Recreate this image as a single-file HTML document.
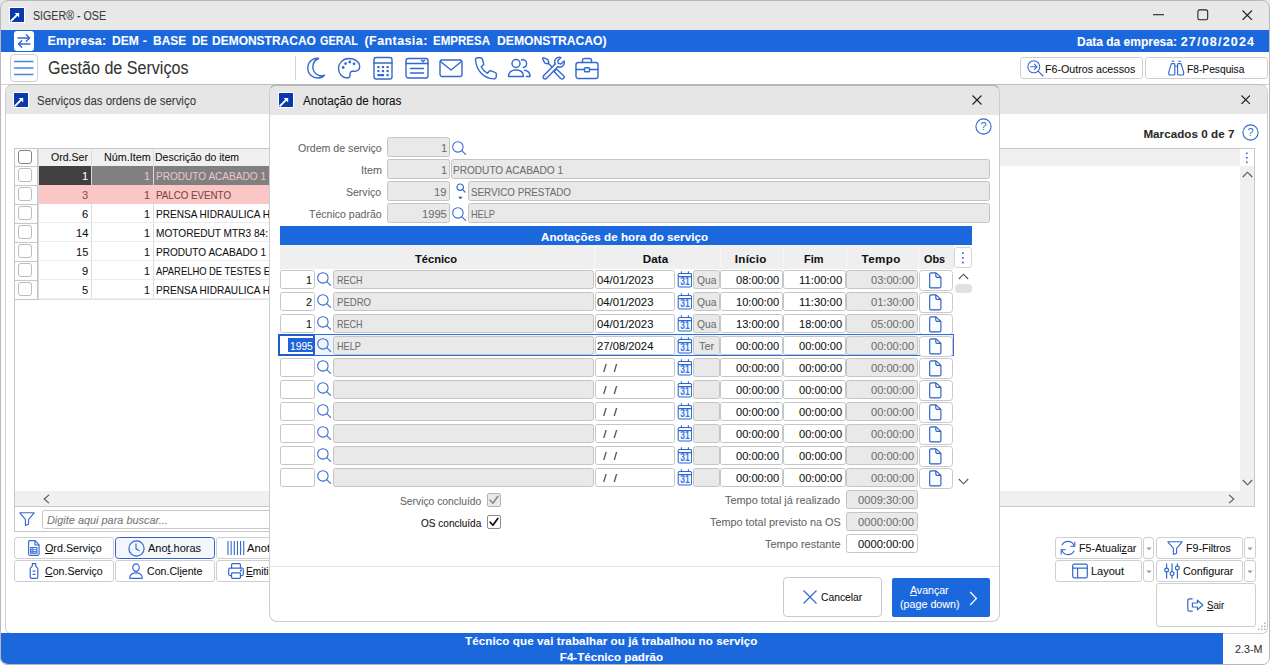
<!DOCTYPE html>
<html><head><meta charset="utf-8"><title>SIGER - OSE</title>
<style>
html,body{margin:0;padding:0;}
body{width:1270px;height:665px;overflow:hidden;background:#fff;font-family:"Liberation Sans",sans-serif;position:relative;}
#root{position:absolute;left:0;top:0;width:1270px;height:665px;overflow:hidden;}
#root div, #root svg, #root span.t{position:absolute;box-sizing:border-box;}
span.t{white-space:pre;line-height:16px;height:16px;-webkit-text-stroke:0.08px currentColor;}
.f{border:1px solid #c6c6c6;border-radius:2.5px;background:#fff;}
.g{border:1px solid #c4c4c4;border-radius:2.5px;background:#e9e9e9;}
.btn{border:1px solid #cfcfcf;border-radius:3px;background:#fff;}
</style></head><body><div id="root">
<div class="" style="left:0px;top:0px;width:1270px;height:665px;background:#fff;"></div>
<div class="" style="left:0px;top:0px;width:1270px;height:30px;background:#e8e8e8;"></div>
<svg style="left:9px;top:7px;" width="16" height="16" viewBox="0 0 16 16" preserveAspectRatio="none" fill="none"><rect x="0" y="0" width="16" height="16" fill="#fff"/><rect x="1" y="1" width="14" height="14" fill="#0b38ac"/><path d="M1.6 14.4 L8.6 7.4" stroke="#fff" stroke-width="2"/><path d="M5.6 6 H10.2 V10.6 Z" fill="#fff"/></svg>
<span class="t" style="left:33px;top:7.97px;font-size:12.5px;font-weight:400;color:#3a3a3a;letter-spacing:0.000px;transform:scaleX(0.8526);transform-origin:0 0;">SIGER® - OSE</span>
<svg style="left:1153px;top:14px;" width="12" height="2" viewBox="0 0 12 2" preserveAspectRatio="none" fill="none"><path d="M0 0.7 H11" stroke="#222" stroke-width="1.1"/></svg>
<svg style="left:1197px;top:9px;" width="12" height="12" viewBox="0 0 12 12" preserveAspectRatio="none" fill="none"><rect x="0.9" y="0.9" width="9.8" height="9.8" rx="1.8" stroke="#222" stroke-width="1.1"/></svg>
<svg style="left:1242px;top:9.5px;" width="10.5" height="10.5" viewBox="0 0 10.5 10.5" preserveAspectRatio="none" fill="none"><path d="M0.5 0.5 L10.0 10.0 M10.0 0.5 L0.5 10.0" stroke="#222" stroke-width="1.1"/></svg>
<div class="" style="left:0px;top:30px;width:1270px;height:22px;background:#1b68dd;"></div>
<div class="" style="left:14px;top:31px;width:20px;height:20px;background:#fff;border-radius:3px;"></div>
<svg style="left:14px;top:31px;" width="20" height="20" viewBox="0 0 20 20" preserveAspectRatio="none" fill="none"><path d="M4 7 H15.5 M12.3 3.8 L15.6 7 L12.3 10.2 M16 13 H4.5 M7.7 9.8 L4.4 13 L7.7 16.2" stroke="#3368cc" stroke-width="1.4" stroke-linecap="round" stroke-linejoin="round"/></svg>
<span class="t" style="left:47.5px;top:32.97px;font-size:12.5px;font-weight:700;color:#fff;letter-spacing:0.245px;">Empresa:</span>
<span class="t" style="left:111.9px;top:32.97px;font-size:12.5px;font-weight:700;color:#fff;letter-spacing:0.000px;transform:scaleX(0.9647);transform-origin:0 0;">DEM</span>
<span class="t" style="left:142.8px;top:32.97px;font-size:12.5px;font-weight:700;color:#fff;letter-spacing:0.328px;">-</span>
<span class="t" style="left:153px;top:32.97px;font-size:12.5px;font-weight:700;color:#fff;letter-spacing:0.000px;transform:scaleX(0.9558);transform-origin:0 0;">BASE</span>
<span class="t" style="left:191.9px;top:32.97px;font-size:12.5px;font-weight:700;color:#fff;letter-spacing:0.000px;transform:scaleX(0.9151);transform-origin:0 0;">DE</span>
<span class="t" style="left:212.4px;top:32.97px;font-size:12.5px;font-weight:700;color:#fff;letter-spacing:0.000px;transform:scaleX(0.9590);transform-origin:0 0;">DEMONSTRACAO</span>
<span class="t" style="left:319.7px;top:32.97px;font-size:12.5px;font-weight:700;color:#fff;letter-spacing:0.000px;transform:scaleX(0.8686);transform-origin:0 0;">GERAL</span>
<span class="t" style="left:364.5px;top:32.97px;font-size:12.5px;font-weight:700;color:#fff;letter-spacing:0.417px;">(Fantasia:</span>
<span class="t" style="left:433px;top:32.97px;font-size:12.5px;font-weight:700;color:#fff;letter-spacing:0.000px;transform:scaleX(0.9235);transform-origin:0 0;">EMPRESA</span>
<span class="t" style="left:497px;top:32.97px;font-size:12.5px;font-weight:700;color:#fff;letter-spacing:0.000px;transform:scaleX(0.9742);transform-origin:0 0;">DEMONSTRACAO)</span>
<span class="t" style="left:1076.5px;top:33.77px;font-size:12.5px;font-weight:700;color:#fff;letter-spacing:0.000px;transform:scaleX(0.9586);transform-origin:0 0;">Data da empresa:</span>
<span class="t" style="left:1180.7px;top:33.77px;font-size:12.5px;font-weight:700;color:#fff;letter-spacing:1.200px;">27/08/2024</span>
<div class="" style="left:10px;top:54px;width:28px;height:28px;background:#fff;border:1px solid #cdcdcd;border-radius:4px;"></div>
<svg style="left:14px;top:60px;" width="20" height="16" viewBox="0 0 20 16" preserveAspectRatio="none" fill="none"><path d="M0 1.5 H19.5 M0 8 H19.5 M0 14.5 H19.5" stroke="#4a88dc" stroke-width="1.5"/></svg>
<span class="t" style="left:47.5px;top:60.20px;font-size:17.6px;font-weight:400;color:#333;letter-spacing:0.000px;transform:scaleX(0.9150);transform-origin:0 0;">Gestão de Serviços</span>
<div class="" style="left:295px;top:56px;width:1px;height:24px;background:#d4d4d4;"></div>
<svg style="left:303px;top:56px;" width="24" height="24" viewBox="0 0 24 24" preserveAspectRatio="none" fill="none"><g stroke="#3368cc" stroke-width="1.4" stroke-linecap="round" stroke-linejoin="round"><path d="M15.5 2.5 C10 4.5 8.5 11 11 15.5 C13 19.3 17.5 21 21.5 19.2 C18.5 22.8 12 23 8 19.5 C3.5 15.5 3.8 8 8.5 4.3 C10.6 2.7 13.2 2 15.5 2.5 Z"/></g></svg>
<svg style="left:337px;top:56px;" width="24" height="24" viewBox="0 0 24 24" preserveAspectRatio="none" fill="none"><g stroke="#3368cc" stroke-width="1.4" stroke-linecap="round" stroke-linejoin="round"><path d="M12 2.5 C5.5 2.5 1.5 7.5 1.5 12.5 C1.5 18 5.5 22 10 22 C12.5 22 13.3 20.4 13 18.6 C12.6 16.4 14 15 16.3 15.2 C20 15.6 23 13.8 22.7 10.3 C22.3 5.6 17.8 2.5 12 2.5 Z"/><circle cx="6.2" cy="11.5" r="0.7" fill="#3368cc"/><circle cx="8.6" cy="7.6" r="0.7" fill="#3368cc"/><circle cx="12.8" cy="6" r="0.7" fill="#3368cc"/><circle cx="17" cy="7.8" r="0.7" fill="#3368cc"/></g></svg>
<svg style="left:371px;top:56px;" width="24" height="24" viewBox="0 0 24 24" preserveAspectRatio="none" fill="none"><g stroke="#3368cc" stroke-width="1.4" stroke-linecap="round" stroke-linejoin="round"><rect x="3" y="1.5" width="18" height="21.5" rx="2.2"/><path d="M3 7 H21"/><g fill="#3368cc" stroke="none"><rect x="6.3" y="10" width="2.2" height="2.2"/><rect x="10.9" y="10" width="2.2" height="2.2"/><rect x="15.5" y="10" width="2.2" height="2.2"/><rect x="6.3" y="14" width="2.2" height="2.2"/><rect x="10.9" y="14" width="2.2" height="2.2"/><rect x="15.5" y="14" width="2.2" height="2.2"/><rect x="6.3" y="18" width="6.8" height="2.2"/><rect x="15.5" y="18" width="2.2" height="2.2"/></g></g></svg>
<svg style="left:405px;top:56px;" width="24" height="24" viewBox="0 0 24 24" preserveAspectRatio="none" fill="none"><g stroke="#3368cc" stroke-width="1.4" stroke-linecap="round" stroke-linejoin="round"><rect x="1" y="2.5" width="22" height="19.5" rx="2.2"/><path d="M1 7.5 H23 M5.5 12.5 H18.5 M5.5 17 H18.5 M16.5 4.3 L18 5.8 L19.5 4.3"/></g></svg>
<svg style="left:439px;top:56px;" width="24" height="24" viewBox="0 0 24 24" preserveAspectRatio="none" fill="none"><g stroke="#3368cc" stroke-width="1.4" stroke-linecap="round" stroke-linejoin="round"><rect x="1" y="4" width="22" height="16.5" rx="2.2"/><path d="M1.5 5.5 L12 14 L22.5 5.5"/></g></svg>
<svg style="left:473px;top:56px;" width="24" height="24" viewBox="0 0 24 24" preserveAspectRatio="none" fill="none"><g stroke="#3368cc" stroke-width="1.4" stroke-linecap="round" stroke-linejoin="round"><path d="M2.5 4.2 C2.2 2.8 3.3 1.8 4.8 1.8 H7.6 C8.5 1.8 9.1 2.3 9.4 3.2 L10.6 7.3 C10.8 8.1 10.6 8.8 9.9 9.4 L8.2 10.8 C9.6 13.8 11.6 15.8 14.6 17.3 L16 15.5 C16.5 14.8 17.3 14.6 18.1 14.9 L22 16.3 C22.9 16.6 23.3 17.3 23.3 18.1 V20.3 C23.3 21.9 22.2 23 20.6 22.9 C10.6 22.2 3.6 14.6 2.5 4.2 Z"/></g></svg>
<svg style="left:507px;top:56px;" width="24" height="24" viewBox="0 0 24 24" preserveAspectRatio="none" fill="none"><g stroke="#3368cc" stroke-width="1.4" stroke-linecap="round" stroke-linejoin="round"><circle cx="9" cy="7.5" r="4"/><path d="M1.5 20.5 C1.5 16.2 4.5 14 9 14 C13.5 14 16.5 16.2 16.5 20.5 Z"/><path d="M14.5 3.8 C17.3 3.2 19.6 5 19.6 7.6 C19.6 9.6 18.3 11.2 16.4 11.5 M17.5 14.2 C21 14.6 23 16.8 23 20.5 H19.3"/></g></svg>
<svg style="left:541px;top:56px;" width="24" height="24" viewBox="0 0 24 24" preserveAspectRatio="none" fill="none"><g stroke="#3368cc" stroke-width="1.4" stroke-linecap="round" stroke-linejoin="round"><path d="M14.2 8 L2.7 19.4 C1.8 20.3 1.8 21.6 2.6 22.4 C3.4 23.2 4.8 23.2 5.7 22.3 L16.8 10.7"/><path d="M14.2 8 C13 5.6 13.9 2.7 16.4 1.6 C17.6 1.1 18.9 1.1 20 1.6 L16.8 4.8 L17.4 7.4 L20 8 L23.1 4.9 C23.6 6.3 23.4 7.9 22.5 9.2 C21.2 11 18.8 11.6 16.8 10.7"/><circle cx="4.3" cy="20.7" r="0.55" fill="#3368cc" stroke="none"/><path d="M2.6 1.6 L6.8 3.6 L7.8 6.4 L6.4 7.8 L3.6 6.8 L1.6 2.6 Z M7 7 L10.6 10.6"/><path d="M13 15.4 L15.4 13 L22.4 19.6 C23.3 20.5 23.3 21.7 22.5 22.5 C21.7 23.3 20.4 23.3 19.6 22.4 Z"/></g></svg>
<svg style="left:575px;top:56px;" width="24" height="24" viewBox="0 0 24 24" preserveAspectRatio="none" fill="none"><g stroke="#3368cc" stroke-width="1.4" stroke-linecap="round" stroke-linejoin="round"><rect x="1" y="6.5" width="22" height="16" rx="2.2"/><path d="M7.5 6.5 V4.3 C7.5 3.2 8.3 2.5 9.4 2.5 H14.6 C15.7 2.5 16.5 3.2 16.5 4.3 V6.5 M1 13.5 H9.5 M14.5 13.5 H23"/><rect x="9.5" y="11.8" width="5" height="4" rx="0.8"/></g></svg>
<div class="btn" style="left:1020px;top:57px;width:123px;height:22px;"></div>
<svg style="left:1027px;top:60px;" width="17" height="17" viewBox="0 0 17 17" preserveAspectRatio="none" fill="none"><g stroke="#3368cc" stroke-width="1.1" stroke-linecap="round" stroke-linejoin="round"><circle cx="6.8" cy="6.8" r="6"/><path d="M11.2 11.2 L16 16 M3.6 6.8 H9.8 M7.4 4.2 L10 6.8 L7.4 9.4"/></g></svg>
<span class="t" style="left:1045.3px;top:61.08px;font-size:11.6px;font-weight:400;color:#111;letter-spacing:0.000px;transform:scaleX(0.9220);transform-origin:0 0;">F6-Outros acessos</span>
<div class="btn" style="left:1145px;top:57px;width:123px;height:22px;"></div>
<svg style="left:1168px;top:60px;" width="17" height="17" viewBox="0 0 17 17" preserveAspectRatio="none" fill="none"><g stroke="#3368cc" stroke-width="1.15" stroke-linejoin="round"><path d="M3.4 3.6 H6 Q6.8 3.6 6.8 4.4 V14 Q6.8 15 5.8 15 H1.8 Q0.8 15 0.8 14 V11.8 Z M13 3.6 H10.4 Q9.6 3.6 9.6 4.4 V14 Q9.6 15 10.6 15 H14.6 Q15.6 15 15.6 14 V11.8 Z M6.8 6.2 H9.6 M3.5 1.2 H6.2 M10.2 1.2 H12.9"/></g></svg>
<span class="t" style="left:1186.6px;top:61.08px;font-size:11.6px;font-weight:400;color:#111;letter-spacing:0.000px;transform:scaleX(0.8818);transform-origin:0 0;">F8-Pesquisa</span>
<div class="" style="left:0px;top:84px;width:1270px;height:1px;background:#d0d0d0;"></div>
<div class="" style="left:5px;top:84px;width:1263px;height:550px;background:#fff;border:1px solid #cfcfcf;border-top-color:#bdbdbd;border-radius:8px 8px 6px 6px;overflow:hidden;"><div style="left:0;top:0;width:1263px;height:29px;background:#e6e6e6;"></div></div>
<svg style="left:13px;top:91.5px;" width="16" height="16" viewBox="0 0 16 16" preserveAspectRatio="none" fill="none"><rect x="0" y="0" width="16" height="16" fill="#fff"/><rect x="1" y="1" width="14" height="14" fill="#0b38ac"/><path d="M1.6 14.4 L8.6 7.4" stroke="#fff" stroke-width="2"/><path d="M5.6 6 H10.2 V10.6 Z" fill="#fff"/></svg>
<span class="t" style="left:37px;top:92.57px;font-size:12.5px;font-weight:400;color:#3a3a3a;letter-spacing:0.000px;transform:scaleX(0.9154);transform-origin:0 0;">Serviços das ordens de serviço</span>
<svg style="left:1240.5px;top:94.5px;" width="9.5" height="9.5" viewBox="0 0 9.5 9.5" preserveAspectRatio="none" fill="none"><path d="M0.5 0.5 L9.0 9.0 M9.0 0.5 L0.5 9.0" stroke="#222" stroke-width="1.15"/></svg>
<span class="t" style="left:1143.4px;top:125.98px;font-size:11.6px;font-weight:700;color:#2a2a2a;letter-spacing:0.056px;">Marcados 0 de 7</span>
<svg style="left:1241.5px;top:123.5px;" width="17" height="17" viewBox="0 0 17 17" preserveAspectRatio="none" fill="none"><circle cx="8.5" cy="8.5" r="7.6" stroke="#3368cc" stroke-width="1.1"/><text x="8.5" y="12.4" font-family="Liberation Sans, sans-serif" font-size="11" font-weight="400" text-anchor="middle" fill="#3368cc">?</text></svg>
<div class="" style="left:14px;top:148px;width:1241px;height:359px;border:1px solid #c8c8c8;background:#fff;"></div>
<div class="" style="left:15px;top:149px;width:1239px;height:17px;background:#f0f0f0;"></div>
<div class="" style="left:1240px;top:149px;width:14px;height:17px;background:#fff;"></div>
<div class="" style="left:1240px;top:166px;width:14px;height:340px;background:#f0f0f0;"></div>
<div class="" style="left:15px;top:491px;width:1239px;height:15px;background:#f0f0f0;"></div>
<div class="" style="left:15px;top:149px;width:24px;height:151px;border-right:2px solid #c4c4c4;border-bottom:1px solid #c4c4c4;background:#fdfdfd;"></div>
<div class="" style="left:38px;top:149px;width:1px;height:150px;background:#d8d8d8;"></div>
<div class="" style="left:91px;top:149px;width:1px;height:150px;background:#dcdcdc;"></div>
<div class="" style="left:153px;top:149px;width:1px;height:150px;background:#dcdcdc;"></div>
<div class="" style="left:39px;top:166px;width:955px;height:1px;background:#e0e0e0;"></div>
<span class="t" style="left:51px;top:149.28px;font-size:11.6px;font-weight:400;color:#111;letter-spacing:0.000px;transform:scaleX(0.9115);transform-origin:0 0;">Ord.Ser</span>
<span class="t" style="left:103.5px;top:149.28px;font-size:11.6px;font-weight:400;color:#111;letter-spacing:0.000px;transform:scaleX(0.9294);transform-origin:0 0;">Núm.Item</span>
<span class="t" style="left:155.4px;top:149.28px;font-size:11.6px;font-weight:400;color:#111;letter-spacing:0.000px;transform:scaleX(0.9063);transform-origin:0 0;">Descrição do item</span>
<div class="" style="left:18px;top:150px;width:14px;height:14px;background:#fff;border:1px solid #858585;border-radius:3px;"></div>
<div class="" style="left:39px;top:166px;width:52px;height:19px;background:#404040;"></div>
<div class="" style="left:92px;top:166px;width:61px;height:19px;background:#808080;"></div>
<div class="" style="left:154px;top:166px;width:840px;height:19px;background:#808080;"></div>
<div class="" style="left:18px;top:168px;width:14px;height:14px;background:#fff;border:1px solid #bcbcbc;border-radius:3px;"></div>
<div class="" style="left:15px;top:166px;width:22px;height:1px;background:#c8c8c8;"></div>
<span class="t" style="left:82.1px;top:168.08px;font-size:11.6px;font-weight:400;color:#fff;letter-spacing:0.000px;transform:scaleX(0.9608);transform-origin:0 0;">1</span>
<span class="t" style="left:144.2px;top:168.08px;font-size:11.6px;font-weight:400;color:#e8c4c4;letter-spacing:0.000px;transform:scaleX(0.9298);transform-origin:0 0;">1</span>
<span class="t" style="left:156.2px;top:168.08px;font-size:11.6px;font-weight:400;color:#e8c4c4;letter-spacing:0.000px;transform:scaleX(0.8681);transform-origin:0 0;">PRODUTO ACABADO 1</span>
<div class="" style="left:39px;top:185px;width:955px;height:19px;background:#fbc6c6;"></div>
<div class="" style="left:18px;top:187px;width:14px;height:14px;background:#fff;border:1px solid #bcbcbc;border-radius:3px;"></div>
<div class="" style="left:15px;top:185px;width:22px;height:1px;background:#c8c8c8;"></div>
<span class="t" style="left:82.1px;top:187.08px;font-size:11.6px;font-weight:400;color:#8a5050;letter-spacing:0.000px;transform:scaleX(0.9608);transform-origin:0 0;">3</span>
<span class="t" style="left:144.2px;top:187.08px;font-size:11.6px;font-weight:400;color:#7a4444;letter-spacing:0.000px;transform:scaleX(0.9298);transform-origin:0 0;">1</span>
<span class="t" style="left:156.2px;top:187.08px;font-size:11.6px;font-weight:400;color:#7a4444;letter-spacing:0.000px;transform:scaleX(0.8414);transform-origin:0 0;">PALCO EVENTO</span>
<div class="" style="left:39px;top:222px;width:955px;height:1px;background:#ececec;"></div>
<div class="" style="left:18px;top:206px;width:14px;height:14px;background:#fff;border:1px solid #bcbcbc;border-radius:3px;"></div>
<div class="" style="left:15px;top:204px;width:22px;height:1px;background:#c8c8c8;"></div>
<span class="t" style="left:82.1px;top:206.08px;font-size:11.6px;font-weight:400;color:#111;letter-spacing:0.000px;transform:scaleX(0.9608);transform-origin:0 0;">6</span>
<span class="t" style="left:144.2px;top:206.08px;font-size:11.6px;font-weight:400;color:#111;letter-spacing:0.000px;transform:scaleX(0.9298);transform-origin:0 0;">1</span>
<span class="t" style="left:156.2px;top:206.08px;font-size:11.6px;font-weight:400;color:#111;letter-spacing:0.000px;transform:scaleX(0.8673);transform-origin:0 0;">PRENSA HIDRAULICA H</span>
<div class="" style="left:39px;top:241px;width:955px;height:1px;background:#ececec;"></div>
<div class="" style="left:18px;top:225px;width:14px;height:14px;background:#fff;border:1px solid #bcbcbc;border-radius:3px;"></div>
<div class="" style="left:15px;top:223px;width:22px;height:1px;background:#c8c8c8;"></div>
<span class="t" style="left:75.89999999999999px;top:225.08px;font-size:11.6px;font-weight:400;color:#111;letter-spacing:0.000px;transform:scaleX(0.9608);transform-origin:0 0;">14</span>
<span class="t" style="left:144.2px;top:225.08px;font-size:11.6px;font-weight:400;color:#111;letter-spacing:0.000px;transform:scaleX(0.9298);transform-origin:0 0;">1</span>
<span class="t" style="left:156.2px;top:225.08px;font-size:11.6px;font-weight:400;color:#111;letter-spacing:0.000px;transform:scaleX(0.8721);transform-origin:0 0;">MOTOREDUT MTR3 84:</span>
<div class="" style="left:39px;top:260px;width:955px;height:1px;background:#ececec;"></div>
<div class="" style="left:18px;top:244px;width:14px;height:14px;background:#fff;border:1px solid #bcbcbc;border-radius:3px;"></div>
<div class="" style="left:15px;top:242px;width:22px;height:1px;background:#c8c8c8;"></div>
<span class="t" style="left:75.89999999999999px;top:244.08px;font-size:11.6px;font-weight:400;color:#111;letter-spacing:0.000px;transform:scaleX(0.9608);transform-origin:0 0;">15</span>
<span class="t" style="left:144.2px;top:244.08px;font-size:11.6px;font-weight:400;color:#111;letter-spacing:0.000px;transform:scaleX(0.9298);transform-origin:0 0;">1</span>
<span class="t" style="left:156.2px;top:244.08px;font-size:11.6px;font-weight:400;color:#111;letter-spacing:0.000px;transform:scaleX(0.8681);transform-origin:0 0;">PRODUTO ACABADO 1</span>
<div class="" style="left:39px;top:279px;width:955px;height:1px;background:#ececec;"></div>
<div class="" style="left:18px;top:263px;width:14px;height:14px;background:#fff;border:1px solid #bcbcbc;border-radius:3px;"></div>
<div class="" style="left:15px;top:261px;width:22px;height:1px;background:#c8c8c8;"></div>
<span class="t" style="left:82.1px;top:263.08px;font-size:11.6px;font-weight:400;color:#111;letter-spacing:0.000px;transform:scaleX(0.9608);transform-origin:0 0;">9</span>
<span class="t" style="left:144.2px;top:263.08px;font-size:11.6px;font-weight:400;color:#111;letter-spacing:0.000px;transform:scaleX(0.9298);transform-origin:0 0;">1</span>
<span class="t" style="left:156.2px;top:263.08px;font-size:11.6px;font-weight:400;color:#111;letter-spacing:0.000px;transform:scaleX(0.8104);transform-origin:0 0;">APARELHO DE TESTES E</span>
<div class="" style="left:39px;top:298px;width:955px;height:1px;background:#ececec;"></div>
<div class="" style="left:18px;top:282px;width:14px;height:14px;background:#fff;border:1px solid #bcbcbc;border-radius:3px;"></div>
<div class="" style="left:15px;top:280px;width:22px;height:1px;background:#c8c8c8;"></div>
<span class="t" style="left:82.1px;top:282.08px;font-size:11.6px;font-weight:400;color:#111;letter-spacing:0.000px;transform:scaleX(0.9608);transform-origin:0 0;">5</span>
<span class="t" style="left:144.2px;top:282.08px;font-size:11.6px;font-weight:400;color:#111;letter-spacing:0.000px;transform:scaleX(0.9298);transform-origin:0 0;">1</span>
<span class="t" style="left:156.2px;top:282.08px;font-size:11.6px;font-weight:400;color:#111;letter-spacing:0.000px;transform:scaleX(0.8673);transform-origin:0 0;">PRENSA HIDRAULICA H</span>
<div class="" style="left:39px;top:299px;width:955px;height:1px;background:#e4e4e4;"></div>
<svg style="left:1245px;top:152px;" width="4" height="12" viewBox="0 0 4 12" preserveAspectRatio="none" fill="none"><g fill="#3368cc"><rect x="1" y="0.5" width="1.6" height="1.6"/><rect x="1" y="5" width="1.6" height="1.6"/><rect x="1" y="9.5" width="1.6" height="1.6"/></g></svg>
<svg style="left:1242px;top:171px;" width="11" height="7" viewBox="0 0 11 7" preserveAspectRatio="none" fill="none"><path d="M0.8 6 L5.5 1.2 L10.2 6" stroke="#555" stroke-width="1.1"/></svg>
<svg style="left:1242px;top:479px;" width="11" height="7" viewBox="0 0 11 7" preserveAspectRatio="none" fill="none"><path d="M0.8 1 L5.5 5.8 L10.2 1" stroke="#555" stroke-width="1.1"/></svg>
<svg style="left:43px;top:494px;" width="7" height="10" viewBox="0 0 7 10" preserveAspectRatio="none" fill="none"><path d="M6 0.8 L1.2 5 L6 9.2" stroke="#555" stroke-width="1.1"/></svg>
<svg style="left:1228px;top:494px;" width="7" height="10" viewBox="0 0 7 10" preserveAspectRatio="none" fill="none"><path d="M1 0.8 L5.8 5 L1 9.2" stroke="#555" stroke-width="1.1"/></svg>
<div class="" style="left:14px;top:507px;width:960px;height:25px;border:1px solid #c8c8c8;border-top:none;border-right:none;background:#fff;"></div>
<svg style="left:19px;top:512px;" width="16" height="14" viewBox="0 0 16 14" preserveAspectRatio="none" fill="none"><path d="M0.8 0.8 H15.2 L9.6 7.4 V12.2 L6.4 13.4 V7.4 Z" stroke="#3368cc" stroke-width="1.1" stroke-linejoin="round"/></svg>
<div class="f" style="left:42px;top:510px;width:930px;height:19px;"></div>
<span class="t" style="left:46.7px;top:511.98px;font-size:11.6px;font-weight:400;color:#777;letter-spacing:0.000px;transform:scaleX(0.9403);transform-origin:0 0;font-style:italic;">Digite aqui para buscar...</span>
<div class="btn" style="left:14px;top:537px;width:100px;height:22px;"></div>
<div class="" style="left:115px;top:537px;width:100px;height:22px;background:#f3f7fd;border:1px solid #3563c2;border-radius:3.5px;"></div>
<div class="btn" style="left:216px;top:537px;width:100px;height:22px;"></div>
<div class="btn" style="left:14px;top:560px;width:100px;height:22px;"></div>
<div class="btn" style="left:115px;top:560px;width:100px;height:22px;"></div>
<div class="btn" style="left:216px;top:560px;width:100px;height:22px;"></div>
<svg style="left:28px;top:540px;" width="12.5" height="16" viewBox="0 0 14 17" preserveAspectRatio="none" fill="none"><g stroke="#3368cc" stroke-width="1.25" stroke-linejoin="round"><path d="M1.6 0.7 H8 L12.4 5.1 V15 Q12.4 16.3 11.1 16.3 H1.9 Q0.7 16.3 0.7 15 V1.6 Q0.7 0.7 1.6 0.7 Z M7.8 0.9 V5.3 H12.2"/><rect x="3" y="8" width="7" height="6"/><path d="M3 10.3 H10 M3 12.2 H10 M5.4 8 V14" stroke-width="0.9"/></g></svg>
<span class="t" style="left:44.8px;top:540.48px;font-size:11.6px;font-weight:400;color:#111;letter-spacing:0.000px;transform:scaleX(0.9262);transform-origin:0 0;"><u>O</u>rd.Serviço</span>
<svg style="left:128px;top:540px;" width="17" height="17" viewBox="0 0 17 17" preserveAspectRatio="none" fill="none"><g stroke="#3368cc" stroke-width="1.2" stroke-linecap="round"><circle cx="8.5" cy="8.5" r="7.6"/><path d="M8 3.8 V8.8 L11 10.6"/></g></svg>
<span class="t" style="left:148px;top:540.48px;font-size:11.6px;font-weight:400;color:#111;letter-spacing:0.000px;transform:scaleX(0.9451);transform-origin:0 0;">Ano<u>t</u>.horas</span>
<svg style="left:227px;top:541px;" width="18" height="14" viewBox="0 0 18 14" preserveAspectRatio="none" fill="none"><path d="M1 0 V14 M4.15 0 V14 M7.3 0 V14 M10.45 0 V14 M13.6 0 V14 M16.75 0 V14" stroke="#3368cc" stroke-width="1.1"/></svg>
<span class="t" style="left:247px;top:540.48px;font-size:11.6px;font-weight:400;color:#111;letter-spacing:0.000px;transform:scaleX(0.9640);transform-origin:0 0;">Anot</span>
<svg style="left:29px;top:563px;" width="10" height="16" viewBox="0 0 10 16" preserveAspectRatio="none" fill="none"><g stroke="#3368cc" stroke-width="1.2" stroke-linejoin="round"><path d="M3.3 0.7 H6.7 V3.2 L8.8 5.3 V14 Q8.8 15.3 7.5 15.3 H2.5 Q1.2 15.3 1.2 14 V5.3 L3.3 3.2 Z"/><path d="M3.6 8.2 H6.4 M3.6 11.4 H6.4"/></g></svg>
<span class="t" style="left:44.8px;top:563.48px;font-size:11.6px;font-weight:400;color:#111;letter-spacing:0.000px;transform:scaleX(0.9136);transform-origin:0 0;"><u>C</u>on.Serviço</span>
<svg style="left:129px;top:563px;" width="14" height="16" viewBox="0 0 16 16" preserveAspectRatio="none" fill="none"><g stroke="#3368cc" stroke-width="1.3" stroke-linejoin="round"><circle cx="8" cy="4.6" r="3.7"/><path d="M0.8 15.3 C0.8 11.6 3.6 9.8 8 9.8 C12.4 9.8 15.2 11.6 15.2 15.3 Z"/></g></svg>
<span class="t" style="left:146.6px;top:563.48px;font-size:11.6px;font-weight:400;color:#111;letter-spacing:0.000px;transform:scaleX(0.9143);transform-origin:0 0;">Con.Cl<u>i</u>ente</span>
<svg style="left:228px;top:563px;" width="16" height="16" viewBox="0 0 17 16" preserveAspectRatio="none" fill="none"><g stroke="#3368cc" stroke-width="1.25" stroke-linejoin="round"><path d="M3.8 5.2 V1.8 Q3.8 0.7 4.9 0.7 H12.1 Q13.2 0.7 13.2 1.8 V5.2"/><rect x="0.7" y="5.2" width="15.6" height="7.4" rx="1.5"/><rect x="3.8" y="9.8" width="9.4" height="5.5" rx="0.8" fill="#fff"/><circle cx="13.6" cy="7.6" r="0.5" fill="#3368cc"/></g></svg>
<span class="t" style="left:246px;top:563.48px;font-size:11.6px;font-weight:400;color:#111;letter-spacing:0.000px;transform:scaleX(0.8776);transform-origin:0 0;"><u>E</u>mitir</span>
<div class="btn" style="left:1055px;top:537px;width:87px;height:22px;"></div>
<div class="btn" style="left:1143px;top:537px;width:11px;height:22px;"></div>
<div class="btn" style="left:1156px;top:537px;width:87px;height:22px;"></div>
<div class="btn" style="left:1244px;top:537px;width:12px;height:22px;"></div>
<div class="btn" style="left:1055px;top:560px;width:87px;height:22px;"></div>
<div class="btn" style="left:1143px;top:560px;width:11px;height:22px;"></div>
<div class="btn" style="left:1156px;top:560px;width:87px;height:22px;"></div>
<div class="btn" style="left:1244px;top:560px;width:12px;height:22px;"></div>
<div class="btn" style="left:1156px;top:583px;width:100px;height:44px;"></div>
<svg style="left:1146px;top:547px;" width="6" height="4" viewBox="0 0 6 4" preserveAspectRatio="none" fill="none"><path d="M0.3 0.5 H5.7 L3 3.2 Z" fill="#9a9a9a"/></svg>
<svg style="left:1247px;top:547px;" width="6" height="4" viewBox="0 0 6 4" preserveAspectRatio="none" fill="none"><path d="M0.3 0.5 H5.7 L3 3.2 Z" fill="#9a9a9a"/></svg>
<svg style="left:1146px;top:570px;" width="6" height="4" viewBox="0 0 6 4" preserveAspectRatio="none" fill="none"><path d="M0.3 0.5 H5.7 L3 3.2 Z" fill="#9a9a9a"/></svg>
<svg style="left:1247px;top:570px;" width="6" height="4" viewBox="0 0 6 4" preserveAspectRatio="none" fill="none"><path d="M0.3 0.5 H5.7 L3 3.2 Z" fill="#9a9a9a"/></svg>
<svg style="left:1060px;top:540px;" width="16" height="16" viewBox="0 0 16 16" preserveAspectRatio="none" fill="none"><g stroke="#3368cc" stroke-width="1.1" stroke-linecap="round" stroke-linejoin="round"><path d="M14.2 6.2 C13.2 3.2 10.8 1.4 8 1.4 C5.4 1.4 3.2 2.8 2 5 M1.8 9.8 C2.8 12.8 5.2 14.6 8 14.6 C10.6 14.6 12.8 13.2 14 11"/><path d="M14.8 2 V6.2 H10.6 M1.2 14 V9.8 H5.4"/></g></svg>
<span class="t" style="left:1078.8px;top:540.48px;font-size:11.6px;font-weight:400;color:#111;letter-spacing:0.000px;transform:scaleX(0.9184);transform-origin:0 0;">F5-Atuali<u>z</u>ar</span>
<svg style="left:1167px;top:541px;" width="16" height="14" viewBox="0 0 16 14" preserveAspectRatio="none" fill="none"><path d="M0.8 0.8 H15.2 L9.6 7.4 V12.2 L6.4 13.4 V7.4 Z" stroke="#3368cc" stroke-width="1.1" stroke-linejoin="round"/></svg>
<span class="t" style="left:1185.6px;top:540.48px;font-size:11.6px;font-weight:400;color:#111;letter-spacing:0.000px;transform:scaleX(0.9152);transform-origin:0 0;">F9-Filtros</span>
<svg style="left:1072px;top:563px;" width="16" height="16" viewBox="0 0 16 16" preserveAspectRatio="none" fill="none"><g stroke="#3368cc" stroke-width="1.2"><rect x="0.7" y="1.2" width="14.6" height="13.6" rx="1.6"/><path d="M0.7 5.2 H15.3 M5.6 5.2 V14.8"/></g></svg>
<span class="t" style="left:1090.6px;top:563.48px;font-size:11.6px;font-weight:400;color:#111;letter-spacing:0.000px;transform:scaleX(0.9479);transform-origin:0 0;">Layout</span>
<svg style="left:1164px;top:563px;" width="16" height="16" viewBox="0 0 16 16" preserveAspectRatio="none" fill="none"><g stroke="#3368cc" stroke-width="1.2" stroke-linecap="round"><path d="M2.6 0.8 V5 M2.6 9 V15.2 M8 0.8 V8.6 M8 12.6 V15.2 M13.4 0.8 V3 M13.4 7 V15.2"/><circle cx="2.6" cy="7" r="1.9"/><circle cx="8" cy="10.6" r="1.9"/><circle cx="13.4" cy="5" r="1.9"/></g></svg>
<span class="t" style="left:1182.8px;top:563.48px;font-size:11.6px;font-weight:400;color:#111;letter-spacing:0.000px;transform:scaleX(0.9309);transform-origin:0 0;">Configurar</span>
<svg style="left:1187px;top:598px;" width="17" height="14" viewBox="0 0 17 14" preserveAspectRatio="none" fill="none"><g stroke="#3368cc" stroke-width="1.2" stroke-linejoin="round" stroke-linecap="round"><path d="M5.2 0.8 H2.6 Q0.8 0.8 0.8 2.6 V11.4 Q0.8 13.2 2.6 13.2 H5.2"/><path d="M5.4 5 H10.4 V2.2 L15.8 7 L10.4 11.8 V9 H5.4 Z"/></g></svg>
<span class="t" style="left:1206.8px;top:597.18px;font-size:11.6px;font-weight:400;color:#111;letter-spacing:0.000px;transform:scaleX(0.8339);transform-origin:0 0;"><u>S</u>air</span>
<svg style="left:1257px;top:622px;" width="10" height="10" viewBox="0 0 10 10" preserveAspectRatio="none" fill="none"><g fill="#b8b8b8"><rect x="7" y="0.5" width="1.6" height="1.6"/><rect x="4" y="3.5" width="1.6" height="1.6"/><rect x="7" y="3.5" width="1.6" height="1.6"/><rect x="1" y="6.5" width="1.6" height="1.6"/><rect x="4" y="6.5" width="1.6" height="1.6"/><rect x="7" y="6.5" width="1.6" height="1.6"/></g></svg>
<div class="" style="left:269px;top:84px;width:731px;height:538px;background:#fff;border:1px solid #cdcdcd;border-top:2px solid #b6b6b6;border-radius:8px;overflow:hidden;"><div style="left:0;top:0;width:731px;height:29px;background:#e6e6e6;"></div></div>
<svg style="left:278px;top:92px;" width="16" height="16" viewBox="0 0 16 16" preserveAspectRatio="none" fill="none"><rect x="0" y="0" width="16" height="16" fill="#fff"/><rect x="1" y="1" width="14" height="14" fill="#0b38ac"/><path d="M1.6 14.4 L8.6 7.4" stroke="#fff" stroke-width="2"/><path d="M5.6 6 H10.2 V10.6 Z" fill="#fff"/></svg>
<span class="t" style="left:302.5px;top:92.97px;font-size:12.5px;font-weight:400;color:#111;letter-spacing:0.000px;transform:scaleX(0.9385);transform-origin:0 0;">Anotação de horas</span>
<svg style="left:972px;top:95px;" width="10" height="10" viewBox="0 0 10 10" preserveAspectRatio="none" fill="none"><path d="M0.5 0.5 L9.5 9.5 M9.5 0.5 L0.5 9.5" stroke="#222" stroke-width="1.2"/></svg>
<svg style="left:974.5px;top:117.5px;" width="17" height="17" viewBox="0 0 17 17" preserveAspectRatio="none" fill="none"><circle cx="8.5" cy="8.5" r="7.6" stroke="#3368cc" stroke-width="1.1"/><text x="8.5" y="12.4" font-family="Liberation Sans, sans-serif" font-size="11" font-weight="400" text-anchor="middle" fill="#3368cc">?</text></svg>
<span class="t" style="left:297.7px;top:140.08px;font-size:11.6px;font-weight:400;color:#666;letter-spacing:0.000px;transform:scaleX(0.9148);transform-origin:0 0;">Ordem de serviço</span>
<span class="t" style="left:360.5px;top:162.08px;font-size:11.6px;font-weight:400;color:#666;letter-spacing:0.000px;transform:scaleX(0.9263);transform-origin:0 0;">Item</span>
<span class="t" style="left:346.3px;top:184.08px;font-size:11.6px;font-weight:400;color:#666;letter-spacing:0.000px;transform:scaleX(0.9076);transform-origin:0 0;">Serviço</span>
<span class="t" style="left:308.7px;top:206.08px;font-size:11.6px;font-weight:400;color:#666;letter-spacing:0.000px;transform:scaleX(0.9096);transform-origin:0 0;">Técnico padrão</span>
<div class="g" style="left:387px;top:137px;width:63px;height:20px;"></div>
<div class="g" style="left:387px;top:159px;width:63px;height:20px;"></div>
<div class="g" style="left:387px;top:181px;width:63px;height:20px;"></div>
<div class="g" style="left:387px;top:203px;width:63px;height:20px;"></div>
<span class="t" style="left:440.6px;top:140.08px;font-size:11.6px;font-weight:400;color:#6e6e6e;letter-spacing:0.000px;transform:scaleX(0.9608);transform-origin:0 0;">1</span>
<span class="t" style="left:440.6px;top:162.08px;font-size:11.6px;font-weight:400;color:#6e6e6e;letter-spacing:0.000px;transform:scaleX(0.9608);transform-origin:0 0;">1</span>
<span class="t" style="left:434.4px;top:184.08px;font-size:11.6px;font-weight:400;color:#6e6e6e;letter-spacing:0.000px;transform:scaleX(0.9608);transform-origin:0 0;">19</span>
<span class="t" style="left:422px;top:206.08px;font-size:11.6px;font-weight:400;color:#6e6e6e;letter-spacing:0.000px;transform:scaleX(0.9614);transform-origin:0 0;">1995</span>
<svg style="left:452px;top:141px;" width="15" height="14" viewBox="0 0 15 14" preserveAspectRatio="none" fill="none"><circle cx="5.9" cy="5.9" r="5.2" stroke="#3368cc" stroke-width="1.05"/><path d="M9.7 9.7 L13.6 13.3" stroke="#3368cc" stroke-width="1.15" stroke-linecap="round"/></svg>
<div class="g" style="left:451px;top:159px;width:539px;height:20px;"></div>
<span class="t" style="left:453.4px;top:162.08px;font-size:11.6px;font-weight:400;color:#6e6e6e;letter-spacing:0.000px;transform:scaleX(0.8689);transform-origin:0 0;">PRODUTO ACABADO 1</span>
<svg style="left:456px;top:183px;" width="10" height="17" viewBox="0 0 10 17" preserveAspectRatio="none" fill="none"><circle cx="4.2" cy="4.2" r="3.2" stroke="#3368cc" stroke-width="1.2"/><path d="M6.6 6.6 L9 9" stroke="#3368cc" stroke-width="1.2" stroke-linecap="round"/><path d="M2.1 13.7 H6.7 L4.4 16.2 Z" fill="#2d55a8"/></svg>
<div class="g" style="left:468px;top:181px;width:522px;height:20px;"></div>
<span class="t" style="left:471.4px;top:184.08px;font-size:11.6px;font-weight:400;color:#6e6e6e;letter-spacing:0.000px;transform:scaleX(0.8457);transform-origin:0 0;">SERVICO PRESTADO</span>
<svg style="left:452px;top:207px;" width="15" height="14" viewBox="0 0 15 14" preserveAspectRatio="none" fill="none"><circle cx="5.9" cy="5.9" r="5.2" stroke="#3368cc" stroke-width="1.05"/><path d="M9.7 9.7 L13.6 13.3" stroke="#3368cc" stroke-width="1.15" stroke-linecap="round"/></svg>
<div class="g" style="left:468px;top:203px;width:522px;height:20px;"></div>
<span class="t" style="left:471.4px;top:206.08px;font-size:11.6px;font-weight:400;color:#6e6e6e;letter-spacing:0.000px;transform:scaleX(0.7856);transform-origin:0 0;">HELP</span>
<div class="" style="left:280px;top:226px;width:692px;height:19px;background:#1b68dd;"></div>
<span class="t" style="left:541px;top:228.88px;font-size:11.6px;font-weight:700;color:#fff;letter-spacing:0.052px;">Anotações de hora do serviço</span>
<div class="" style="left:280px;top:245px;width:674px;height:24px;background:#efefef;"></div>
<div class="" style="left:594px;top:246px;width:1px;height:22px;background:#f8f8f8;"></div>
<div class="" style="left:720px;top:246px;width:1px;height:22px;background:#f8f8f8;"></div>
<div class="" style="left:783px;top:246px;width:1px;height:22px;background:#f8f8f8;"></div>
<div class="" style="left:846px;top:246px;width:1px;height:22px;background:#f8f8f8;"></div>
<div class="" style="left:918px;top:246px;width:1px;height:22px;background:#f8f8f8;"></div>
<span class="t" style="left:414.8px;top:251.28px;font-size:11.6px;font-weight:700;color:#111;letter-spacing:0.000px;transform:scaleX(0.9586);transform-origin:0 0;">Técnico</span>
<span class="t" style="left:642.8px;top:251.28px;font-size:11.6px;font-weight:700;color:#111;letter-spacing:0.086px;">Data</span>
<span class="t" style="left:734.8px;top:251.28px;font-size:11.6px;font-weight:700;color:#111;letter-spacing:0.264px;">Início</span>
<span class="t" style="left:804.2px;top:251.28px;font-size:11.6px;font-weight:700;color:#111;letter-spacing:0.000px;transform:scaleX(0.9406);transform-origin:0 0;">Fim</span>
<span class="t" style="left:861.5px;top:251.28px;font-size:11.6px;font-weight:700;color:#111;letter-spacing:0.411px;">Tempo</span>
<span class="t" style="left:924.2px;top:251.28px;font-size:11.6px;font-weight:700;color:#111;letter-spacing:0.000px;transform:scaleX(0.9307);transform-origin:0 0;">Obs</span>
<div class="" style="left:954px;top:247px;width:18px;height:21px;background:#fff;border:1px solid #d4d4d4;border-radius:3px;"></div>
<svg style="left:961px;top:252px;" width="4" height="12" viewBox="0 0 4 12" preserveAspectRatio="none" fill="none"><g fill="#3368cc"><rect x="1" y="0.3" width="1.7" height="1.7"/><rect x="1" y="5" width="1.7" height="1.7"/><rect x="1" y="9.7" width="1.7" height="1.7"/></g></svg>
<svg style="left:958px;top:273px;" width="11" height="7" viewBox="0 0 11 7" preserveAspectRatio="none" fill="none"><path d="M0.8 6 L5.5 1.2 L10.2 6" stroke="#555" stroke-width="1.1"/></svg>
<div class="" style="left:954.5px;top:284.3px;width:17.6px;height:9px;background:#e1e1e1;border-radius:4px;"></div>
<svg style="left:958px;top:478px;" width="11" height="7" viewBox="0 0 11 7" preserveAspectRatio="none" fill="none"><path d="M0.8 1 L5.5 5.8 L10.2 1" stroke="#555" stroke-width="1.1"/></svg>
<div class="f" style="left:280px;top:270px;width:35px;height:19px;"></div>
<svg style="left:317px;top:272.4px;" width="15" height="14" viewBox="0 0 15 14" preserveAspectRatio="none" fill="none"><circle cx="5.9" cy="5.9" r="5.2" stroke="#3368cc" stroke-width="1.05"/><path d="M9.7 9.7 L13.6 13.3" stroke="#3368cc" stroke-width="1.15" stroke-linecap="round"/></svg>
<div class="g" style="left:333px;top:270px;width:261px;height:19px;"></div>
<div class="f" style="left:595px;top:270px;width:80px;height:19px;"></div>
<svg style="left:677px;top:271px;" width="15" height="17" viewBox="0 0 15 17" preserveAspectRatio="none" fill="none"><rect x="1.2" y="2.5" width="13.4" height="13.4" rx="1.4" stroke="#2d66cf" stroke-width="1.05" fill="#f7fbff"/><path d="M1.2 5.6 H14.6 M4.4 0.3 V2.5 M11.4 0.3 V2.5" stroke="#2d66cf" stroke-width="1.05"/><text x="7.9" y="14.2" font-family="Liberation Sans, sans-serif" font-size="10" font-weight="700" text-anchor="middle" fill="#3b7ad8" textLength="9.4" lengthAdjust="spacingAndGlyphs">31</text></svg>
<div class="g" style="left:693px;top:270px;width:27px;height:19px;"></div>
<div class="f" style="left:720px;top:270px;width:63px;height:19px;"></div>
<div class="f" style="left:783px;top:270px;width:63px;height:19px;"></div>
<div class="g" style="left:846px;top:270px;width:72px;height:19px;"></div>
<div class="" style="left:919px;top:269.5px;width:34px;height:21px;background:#fff;border:1px solid #c9c9c9;border-radius:3.5px;"></div>
<svg style="left:928.6px;top:271.6px;" width="13" height="17" viewBox="0 0 13 17" preserveAspectRatio="none" fill="none"><path d="M2.2 0.8 H7 L11.9 5.3 V14.4 Q11.9 15.9 10.4 15.9 H2.2 Q0.7 15.9 0.7 14.4 V2.3 Q0.7 0.8 2.2 0.8 Z M6.8 1 V4 Q6.8 5.4 8.2 5.4 H11.7" stroke="#2f5fbe" stroke-width="1.15" stroke-linejoin="round" fill="#fafdff"/></svg>
<span class="t" style="left:305.8px;top:271.78px;font-size:11.6px;font-weight:400;color:#111;letter-spacing:0.000px;transform:scaleX(0.9298);transform-origin:0 0;">1</span>
<span class="t" style="left:336.8px;top:271.78px;font-size:11.6px;font-weight:400;color:#6e6e6e;letter-spacing:0.000px;transform:scaleX(0.7791);transform-origin:0 0;">RECH</span>
<span class="t" style="left:597.2px;top:271.78px;font-size:11.6px;font-weight:400;color:#111;letter-spacing:0.000px;transform:scaleX(0.9719);transform-origin:0 0;">04/01/2023</span>
<span class="t" style="left:697px;top:271.78px;font-size:11.6px;font-weight:400;color:#6e6e6e;letter-spacing:0.000px;transform:scaleX(0.8850);transform-origin:0 0;">Qua</span>
<span class="t" style="left:735.8px;top:271.78px;font-size:11.6px;font-weight:400;color:#111;letter-spacing:0.000px;transform:scaleX(0.9570);transform-origin:0 0;">08:00:00</span>
<span class="t" style="left:798.8px;top:271.78px;font-size:11.6px;font-weight:400;color:#111;letter-spacing:0.000px;transform:scaleX(0.9756);transform-origin:0 0;">11:00:00</span>
<span class="t" style="left:871px;top:271.78px;font-size:11.6px;font-weight:400;color:#6e6e6e;letter-spacing:0.000px;transform:scaleX(0.9570);transform-origin:0 0;">03:00:00</span>
<div class="f" style="left:280px;top:292px;width:35px;height:19px;"></div>
<svg style="left:317px;top:294.4px;" width="15" height="14" viewBox="0 0 15 14" preserveAspectRatio="none" fill="none"><circle cx="5.9" cy="5.9" r="5.2" stroke="#3368cc" stroke-width="1.05"/><path d="M9.7 9.7 L13.6 13.3" stroke="#3368cc" stroke-width="1.15" stroke-linecap="round"/></svg>
<div class="g" style="left:333px;top:292px;width:261px;height:19px;"></div>
<div class="f" style="left:595px;top:292px;width:80px;height:19px;"></div>
<svg style="left:677px;top:293px;" width="15" height="17" viewBox="0 0 15 17" preserveAspectRatio="none" fill="none"><rect x="1.2" y="2.5" width="13.4" height="13.4" rx="1.4" stroke="#2d66cf" stroke-width="1.05" fill="#f7fbff"/><path d="M1.2 5.6 H14.6 M4.4 0.3 V2.5 M11.4 0.3 V2.5" stroke="#2d66cf" stroke-width="1.05"/><text x="7.9" y="14.2" font-family="Liberation Sans, sans-serif" font-size="10" font-weight="700" text-anchor="middle" fill="#3b7ad8" textLength="9.4" lengthAdjust="spacingAndGlyphs">31</text></svg>
<div class="g" style="left:693px;top:292px;width:27px;height:19px;"></div>
<div class="f" style="left:720px;top:292px;width:63px;height:19px;"></div>
<div class="f" style="left:783px;top:292px;width:63px;height:19px;"></div>
<div class="g" style="left:846px;top:292px;width:72px;height:19px;"></div>
<div class="" style="left:919px;top:291.5px;width:34px;height:21px;background:#fff;border:1px solid #c9c9c9;border-radius:3.5px;"></div>
<svg style="left:928.6px;top:293.6px;" width="13" height="17" viewBox="0 0 13 17" preserveAspectRatio="none" fill="none"><path d="M2.2 0.8 H7 L11.9 5.3 V14.4 Q11.9 15.9 10.4 15.9 H2.2 Q0.7 15.9 0.7 14.4 V2.3 Q0.7 0.8 2.2 0.8 Z M6.8 1 V4 Q6.8 5.4 8.2 5.4 H11.7" stroke="#2f5fbe" stroke-width="1.15" stroke-linejoin="round" fill="#fafdff"/></svg>
<span class="t" style="left:305.8px;top:293.78px;font-size:11.6px;font-weight:400;color:#111;letter-spacing:0.000px;transform:scaleX(0.9298);transform-origin:0 0;">2</span>
<span class="t" style="left:336.8px;top:293.78px;font-size:11.6px;font-weight:400;color:#6e6e6e;letter-spacing:0.000px;transform:scaleX(0.8246);transform-origin:0 0;">PEDRO</span>
<span class="t" style="left:597.2px;top:293.78px;font-size:11.6px;font-weight:400;color:#111;letter-spacing:0.000px;transform:scaleX(0.9719);transform-origin:0 0;">04/01/2023</span>
<span class="t" style="left:697px;top:293.78px;font-size:11.6px;font-weight:400;color:#6e6e6e;letter-spacing:0.000px;transform:scaleX(0.8850);transform-origin:0 0;">Qua</span>
<span class="t" style="left:735.8px;top:293.78px;font-size:11.6px;font-weight:400;color:#111;letter-spacing:0.000px;transform:scaleX(0.9570);transform-origin:0 0;">10:00:00</span>
<span class="t" style="left:798.8px;top:293.78px;font-size:11.6px;font-weight:400;color:#111;letter-spacing:0.000px;transform:scaleX(0.9756);transform-origin:0 0;">11:30:00</span>
<span class="t" style="left:871px;top:293.78px;font-size:11.6px;font-weight:400;color:#6e6e6e;letter-spacing:0.000px;transform:scaleX(0.9570);transform-origin:0 0;">01:30:00</span>
<div class="f" style="left:280px;top:314px;width:35px;height:19px;"></div>
<svg style="left:317px;top:316.4px;" width="15" height="14" viewBox="0 0 15 14" preserveAspectRatio="none" fill="none"><circle cx="5.9" cy="5.9" r="5.2" stroke="#3368cc" stroke-width="1.05"/><path d="M9.7 9.7 L13.6 13.3" stroke="#3368cc" stroke-width="1.15" stroke-linecap="round"/></svg>
<div class="g" style="left:333px;top:314px;width:261px;height:19px;"></div>
<div class="f" style="left:595px;top:314px;width:80px;height:19px;"></div>
<svg style="left:677px;top:315px;" width="15" height="17" viewBox="0 0 15 17" preserveAspectRatio="none" fill="none"><rect x="1.2" y="2.5" width="13.4" height="13.4" rx="1.4" stroke="#2d66cf" stroke-width="1.05" fill="#f7fbff"/><path d="M1.2 5.6 H14.6 M4.4 0.3 V2.5 M11.4 0.3 V2.5" stroke="#2d66cf" stroke-width="1.05"/><text x="7.9" y="14.2" font-family="Liberation Sans, sans-serif" font-size="10" font-weight="700" text-anchor="middle" fill="#3b7ad8" textLength="9.4" lengthAdjust="spacingAndGlyphs">31</text></svg>
<div class="g" style="left:693px;top:314px;width:27px;height:19px;"></div>
<div class="f" style="left:720px;top:314px;width:63px;height:19px;"></div>
<div class="f" style="left:783px;top:314px;width:63px;height:19px;"></div>
<div class="g" style="left:846px;top:314px;width:72px;height:19px;"></div>
<div class="" style="left:919px;top:313.5px;width:34px;height:21px;background:#fff;border:1px solid #c9c9c9;border-radius:3.5px;"></div>
<svg style="left:928.6px;top:315.6px;" width="13" height="17" viewBox="0 0 13 17" preserveAspectRatio="none" fill="none"><path d="M2.2 0.8 H7 L11.9 5.3 V14.4 Q11.9 15.9 10.4 15.9 H2.2 Q0.7 15.9 0.7 14.4 V2.3 Q0.7 0.8 2.2 0.8 Z M6.8 1 V4 Q6.8 5.4 8.2 5.4 H11.7" stroke="#2f5fbe" stroke-width="1.15" stroke-linejoin="round" fill="#fafdff"/></svg>
<span class="t" style="left:305.8px;top:315.78px;font-size:11.6px;font-weight:400;color:#111;letter-spacing:0.000px;transform:scaleX(0.9298);transform-origin:0 0;">1</span>
<span class="t" style="left:336.8px;top:315.78px;font-size:11.6px;font-weight:400;color:#6e6e6e;letter-spacing:0.000px;transform:scaleX(0.7791);transform-origin:0 0;">RECH</span>
<span class="t" style="left:597.2px;top:315.78px;font-size:11.6px;font-weight:400;color:#111;letter-spacing:0.000px;transform:scaleX(0.9719);transform-origin:0 0;">04/01/2023</span>
<span class="t" style="left:697px;top:315.78px;font-size:11.6px;font-weight:400;color:#6e6e6e;letter-spacing:0.000px;transform:scaleX(0.8850);transform-origin:0 0;">Qua</span>
<span class="t" style="left:735.8px;top:315.78px;font-size:11.6px;font-weight:400;color:#111;letter-spacing:0.000px;transform:scaleX(0.9570);transform-origin:0 0;">13:00:00</span>
<span class="t" style="left:798.8px;top:315.78px;font-size:11.6px;font-weight:400;color:#111;letter-spacing:0.000px;transform:scaleX(0.9570);transform-origin:0 0;">18:00:00</span>
<span class="t" style="left:871px;top:315.78px;font-size:11.6px;font-weight:400;color:#6e6e6e;letter-spacing:0.000px;transform:scaleX(0.9570);transform-origin:0 0;">05:00:00</span>
<div class="" style="left:278px;top:334px;width:676px;height:22px;background:#eef3fc;border:1px solid #2f6fd6;"></div>
<div class="" style="left:278px;top:334px;width:37px;height:22px;background:#fff;border:2px solid #1f5ecb;border-radius:2px;"></div>
<svg style="left:317px;top:338.4px;" width="15" height="14" viewBox="0 0 15 14" preserveAspectRatio="none" fill="none"><circle cx="5.9" cy="5.9" r="5.2" stroke="#3368cc" stroke-width="1.05"/><path d="M9.7 9.7 L13.6 13.3" stroke="#3368cc" stroke-width="1.15" stroke-linecap="round"/></svg>
<div class="g" style="left:333px;top:336px;width:261px;height:19px;"></div>
<div class="f" style="left:595px;top:336px;width:80px;height:19px;"></div>
<svg style="left:677px;top:337px;" width="15" height="17" viewBox="0 0 15 17" preserveAspectRatio="none" fill="none"><rect x="1.2" y="2.5" width="13.4" height="13.4" rx="1.4" stroke="#2d66cf" stroke-width="1.05" fill="#f7fbff"/><path d="M1.2 5.6 H14.6 M4.4 0.3 V2.5 M11.4 0.3 V2.5" stroke="#2d66cf" stroke-width="1.05"/><text x="7.9" y="14.2" font-family="Liberation Sans, sans-serif" font-size="10" font-weight="700" text-anchor="middle" fill="#3b7ad8" textLength="9.4" lengthAdjust="spacingAndGlyphs">31</text></svg>
<div class="g" style="left:693px;top:336px;width:27px;height:19px;"></div>
<div class="f" style="left:720px;top:336px;width:63px;height:19px;"></div>
<div class="f" style="left:783px;top:336px;width:63px;height:19px;"></div>
<div class="g" style="left:846px;top:336px;width:72px;height:19px;"></div>
<div class="" style="left:919px;top:335.5px;width:34px;height:21px;background:#fff;border:1px solid #c9c9c9;border-radius:3.5px;"></div>
<svg style="left:928.6px;top:337.6px;" width="13" height="17" viewBox="0 0 13 17" preserveAspectRatio="none" fill="none"><path d="M2.2 0.8 H7 L11.9 5.3 V14.4 Q11.9 15.9 10.4 15.9 H2.2 Q0.7 15.9 0.7 14.4 V2.3 Q0.7 0.8 2.2 0.8 Z M6.8 1 V4 Q6.8 5.4 8.2 5.4 H11.7" stroke="#2f5fbe" stroke-width="1.15" stroke-linejoin="round" fill="#fafdff"/></svg>
<div class="" style="left:288.3px;top:338.2px;width:24.8px;height:13.8px;background:#1e62d8;"></div>
<span class="t" style="left:289.8px;top:337.78px;font-size:11.6px;font-weight:400;color:#fff;letter-spacing:0.000px;transform:scaleX(0.8838);transform-origin:0 0;">1995</span>
<span class="t" style="left:336.8px;top:337.78px;font-size:11.6px;font-weight:400;color:#6e6e6e;letter-spacing:0.000px;transform:scaleX(0.7856);transform-origin:0 0;">HELP</span>
<span class="t" style="left:597.2px;top:337.78px;font-size:11.6px;font-weight:400;color:#111;letter-spacing:0.000px;transform:scaleX(0.9719);transform-origin:0 0;">27/08/2024</span>
<span class="t" style="left:698.6px;top:337.78px;font-size:11.6px;font-weight:400;color:#6e6e6e;letter-spacing:0.000px;transform:scaleX(0.9311);transform-origin:0 0;">Ter</span>
<span class="t" style="left:735.8px;top:337.78px;font-size:11.6px;font-weight:400;color:#111;letter-spacing:0.000px;transform:scaleX(0.9570);transform-origin:0 0;">00:00:00</span>
<span class="t" style="left:798.8px;top:337.78px;font-size:11.6px;font-weight:400;color:#111;letter-spacing:0.000px;transform:scaleX(0.9570);transform-origin:0 0;">00:00:00</span>
<span class="t" style="left:871px;top:337.78px;font-size:11.6px;font-weight:400;color:#6e6e6e;letter-spacing:0.000px;transform:scaleX(0.9570);transform-origin:0 0;">00:00:00</span>
<div class="f" style="left:280px;top:358px;width:35px;height:19px;"></div>
<svg style="left:317px;top:360.4px;" width="15" height="14" viewBox="0 0 15 14" preserveAspectRatio="none" fill="none"><circle cx="5.9" cy="5.9" r="5.2" stroke="#3368cc" stroke-width="1.05"/><path d="M9.7 9.7 L13.6 13.3" stroke="#3368cc" stroke-width="1.15" stroke-linecap="round"/></svg>
<div class="g" style="left:333px;top:358px;width:261px;height:19px;"></div>
<div class="f" style="left:595px;top:358px;width:80px;height:19px;"></div>
<svg style="left:677px;top:359px;" width="15" height="17" viewBox="0 0 15 17" preserveAspectRatio="none" fill="none"><rect x="1.2" y="2.5" width="13.4" height="13.4" rx="1.4" stroke="#2d66cf" stroke-width="1.05" fill="#f7fbff"/><path d="M1.2 5.6 H14.6 M4.4 0.3 V2.5 M11.4 0.3 V2.5" stroke="#2d66cf" stroke-width="1.05"/><text x="7.9" y="14.2" font-family="Liberation Sans, sans-serif" font-size="10" font-weight="700" text-anchor="middle" fill="#3b7ad8" textLength="9.4" lengthAdjust="spacingAndGlyphs">31</text></svg>
<div class="g" style="left:693px;top:358px;width:27px;height:19px;"></div>
<div class="f" style="left:720px;top:358px;width:63px;height:19px;"></div>
<div class="f" style="left:783px;top:358px;width:63px;height:19px;"></div>
<div class="g" style="left:846px;top:358px;width:72px;height:19px;"></div>
<div class="" style="left:919px;top:357.5px;width:34px;height:21px;background:#fff;border:1px solid #c9c9c9;border-radius:3.5px;"></div>
<svg style="left:928.6px;top:359.6px;" width="13" height="17" viewBox="0 0 13 17" preserveAspectRatio="none" fill="none"><path d="M2.2 0.8 H7 L11.9 5.3 V14.4 Q11.9 15.9 10.4 15.9 H2.2 Q0.7 15.9 0.7 14.4 V2.3 Q0.7 0.8 2.2 0.8 Z M6.8 1 V4 Q6.8 5.4 8.2 5.4 H11.7" stroke="#2f5fbe" stroke-width="1.15" stroke-linejoin="round" fill="#fafdff"/></svg>
<span class="t" style="left:603.2px;top:359.78px;font-size:11.6px;font-weight:400;color:#111;letter-spacing:1.166px;">/</span>
<span class="t" style="left:613.8px;top:359.78px;font-size:11.6px;font-weight:400;color:#111;letter-spacing:1.166px;">/</span>
<span class="t" style="left:735.8px;top:359.78px;font-size:11.6px;font-weight:400;color:#111;letter-spacing:0.000px;transform:scaleX(0.9570);transform-origin:0 0;">00:00:00</span>
<span class="t" style="left:798.8px;top:359.78px;font-size:11.6px;font-weight:400;color:#111;letter-spacing:0.000px;transform:scaleX(0.9570);transform-origin:0 0;">00:00:00</span>
<span class="t" style="left:871px;top:359.78px;font-size:11.6px;font-weight:400;color:#6e6e6e;letter-spacing:0.000px;transform:scaleX(0.9570);transform-origin:0 0;">00:00:00</span>
<div class="f" style="left:280px;top:380px;width:35px;height:19px;"></div>
<svg style="left:317px;top:382.4px;" width="15" height="14" viewBox="0 0 15 14" preserveAspectRatio="none" fill="none"><circle cx="5.9" cy="5.9" r="5.2" stroke="#3368cc" stroke-width="1.05"/><path d="M9.7 9.7 L13.6 13.3" stroke="#3368cc" stroke-width="1.15" stroke-linecap="round"/></svg>
<div class="g" style="left:333px;top:380px;width:261px;height:19px;"></div>
<div class="f" style="left:595px;top:380px;width:80px;height:19px;"></div>
<svg style="left:677px;top:381px;" width="15" height="17" viewBox="0 0 15 17" preserveAspectRatio="none" fill="none"><rect x="1.2" y="2.5" width="13.4" height="13.4" rx="1.4" stroke="#2d66cf" stroke-width="1.05" fill="#f7fbff"/><path d="M1.2 5.6 H14.6 M4.4 0.3 V2.5 M11.4 0.3 V2.5" stroke="#2d66cf" stroke-width="1.05"/><text x="7.9" y="14.2" font-family="Liberation Sans, sans-serif" font-size="10" font-weight="700" text-anchor="middle" fill="#3b7ad8" textLength="9.4" lengthAdjust="spacingAndGlyphs">31</text></svg>
<div class="g" style="left:693px;top:380px;width:27px;height:19px;"></div>
<div class="f" style="left:720px;top:380px;width:63px;height:19px;"></div>
<div class="f" style="left:783px;top:380px;width:63px;height:19px;"></div>
<div class="g" style="left:846px;top:380px;width:72px;height:19px;"></div>
<div class="" style="left:919px;top:379.5px;width:34px;height:21px;background:#fff;border:1px solid #c9c9c9;border-radius:3.5px;"></div>
<svg style="left:928.6px;top:381.6px;" width="13" height="17" viewBox="0 0 13 17" preserveAspectRatio="none" fill="none"><path d="M2.2 0.8 H7 L11.9 5.3 V14.4 Q11.9 15.9 10.4 15.9 H2.2 Q0.7 15.9 0.7 14.4 V2.3 Q0.7 0.8 2.2 0.8 Z M6.8 1 V4 Q6.8 5.4 8.2 5.4 H11.7" stroke="#2f5fbe" stroke-width="1.15" stroke-linejoin="round" fill="#fafdff"/></svg>
<span class="t" style="left:603.2px;top:381.78px;font-size:11.6px;font-weight:400;color:#111;letter-spacing:1.166px;">/</span>
<span class="t" style="left:613.8px;top:381.78px;font-size:11.6px;font-weight:400;color:#111;letter-spacing:1.166px;">/</span>
<span class="t" style="left:735.8px;top:381.78px;font-size:11.6px;font-weight:400;color:#111;letter-spacing:0.000px;transform:scaleX(0.9570);transform-origin:0 0;">00:00:00</span>
<span class="t" style="left:798.8px;top:381.78px;font-size:11.6px;font-weight:400;color:#111;letter-spacing:0.000px;transform:scaleX(0.9570);transform-origin:0 0;">00:00:00</span>
<span class="t" style="left:871px;top:381.78px;font-size:11.6px;font-weight:400;color:#6e6e6e;letter-spacing:0.000px;transform:scaleX(0.9570);transform-origin:0 0;">00:00:00</span>
<div class="f" style="left:280px;top:402px;width:35px;height:19px;"></div>
<svg style="left:317px;top:404.4px;" width="15" height="14" viewBox="0 0 15 14" preserveAspectRatio="none" fill="none"><circle cx="5.9" cy="5.9" r="5.2" stroke="#3368cc" stroke-width="1.05"/><path d="M9.7 9.7 L13.6 13.3" stroke="#3368cc" stroke-width="1.15" stroke-linecap="round"/></svg>
<div class="g" style="left:333px;top:402px;width:261px;height:19px;"></div>
<div class="f" style="left:595px;top:402px;width:80px;height:19px;"></div>
<svg style="left:677px;top:403px;" width="15" height="17" viewBox="0 0 15 17" preserveAspectRatio="none" fill="none"><rect x="1.2" y="2.5" width="13.4" height="13.4" rx="1.4" stroke="#2d66cf" stroke-width="1.05" fill="#f7fbff"/><path d="M1.2 5.6 H14.6 M4.4 0.3 V2.5 M11.4 0.3 V2.5" stroke="#2d66cf" stroke-width="1.05"/><text x="7.9" y="14.2" font-family="Liberation Sans, sans-serif" font-size="10" font-weight="700" text-anchor="middle" fill="#3b7ad8" textLength="9.4" lengthAdjust="spacingAndGlyphs">31</text></svg>
<div class="g" style="left:693px;top:402px;width:27px;height:19px;"></div>
<div class="f" style="left:720px;top:402px;width:63px;height:19px;"></div>
<div class="f" style="left:783px;top:402px;width:63px;height:19px;"></div>
<div class="g" style="left:846px;top:402px;width:72px;height:19px;"></div>
<div class="" style="left:919px;top:401.5px;width:34px;height:21px;background:#fff;border:1px solid #c9c9c9;border-radius:3.5px;"></div>
<svg style="left:928.6px;top:403.6px;" width="13" height="17" viewBox="0 0 13 17" preserveAspectRatio="none" fill="none"><path d="M2.2 0.8 H7 L11.9 5.3 V14.4 Q11.9 15.9 10.4 15.9 H2.2 Q0.7 15.9 0.7 14.4 V2.3 Q0.7 0.8 2.2 0.8 Z M6.8 1 V4 Q6.8 5.4 8.2 5.4 H11.7" stroke="#2f5fbe" stroke-width="1.15" stroke-linejoin="round" fill="#fafdff"/></svg>
<span class="t" style="left:603.2px;top:403.78px;font-size:11.6px;font-weight:400;color:#111;letter-spacing:1.166px;">/</span>
<span class="t" style="left:613.8px;top:403.78px;font-size:11.6px;font-weight:400;color:#111;letter-spacing:1.166px;">/</span>
<span class="t" style="left:735.8px;top:403.78px;font-size:11.6px;font-weight:400;color:#111;letter-spacing:0.000px;transform:scaleX(0.9570);transform-origin:0 0;">00:00:00</span>
<span class="t" style="left:798.8px;top:403.78px;font-size:11.6px;font-weight:400;color:#111;letter-spacing:0.000px;transform:scaleX(0.9570);transform-origin:0 0;">00:00:00</span>
<span class="t" style="left:871px;top:403.78px;font-size:11.6px;font-weight:400;color:#6e6e6e;letter-spacing:0.000px;transform:scaleX(0.9570);transform-origin:0 0;">00:00:00</span>
<div class="f" style="left:280px;top:424px;width:35px;height:19px;"></div>
<svg style="left:317px;top:426.4px;" width="15" height="14" viewBox="0 0 15 14" preserveAspectRatio="none" fill="none"><circle cx="5.9" cy="5.9" r="5.2" stroke="#3368cc" stroke-width="1.05"/><path d="M9.7 9.7 L13.6 13.3" stroke="#3368cc" stroke-width="1.15" stroke-linecap="round"/></svg>
<div class="g" style="left:333px;top:424px;width:261px;height:19px;"></div>
<div class="f" style="left:595px;top:424px;width:80px;height:19px;"></div>
<svg style="left:677px;top:425px;" width="15" height="17" viewBox="0 0 15 17" preserveAspectRatio="none" fill="none"><rect x="1.2" y="2.5" width="13.4" height="13.4" rx="1.4" stroke="#2d66cf" stroke-width="1.05" fill="#f7fbff"/><path d="M1.2 5.6 H14.6 M4.4 0.3 V2.5 M11.4 0.3 V2.5" stroke="#2d66cf" stroke-width="1.05"/><text x="7.9" y="14.2" font-family="Liberation Sans, sans-serif" font-size="10" font-weight="700" text-anchor="middle" fill="#3b7ad8" textLength="9.4" lengthAdjust="spacingAndGlyphs">31</text></svg>
<div class="g" style="left:693px;top:424px;width:27px;height:19px;"></div>
<div class="f" style="left:720px;top:424px;width:63px;height:19px;"></div>
<div class="f" style="left:783px;top:424px;width:63px;height:19px;"></div>
<div class="g" style="left:846px;top:424px;width:72px;height:19px;"></div>
<div class="" style="left:919px;top:423.5px;width:34px;height:21px;background:#fff;border:1px solid #c9c9c9;border-radius:3.5px;"></div>
<svg style="left:928.6px;top:425.6px;" width="13" height="17" viewBox="0 0 13 17" preserveAspectRatio="none" fill="none"><path d="M2.2 0.8 H7 L11.9 5.3 V14.4 Q11.9 15.9 10.4 15.9 H2.2 Q0.7 15.9 0.7 14.4 V2.3 Q0.7 0.8 2.2 0.8 Z M6.8 1 V4 Q6.8 5.4 8.2 5.4 H11.7" stroke="#2f5fbe" stroke-width="1.15" stroke-linejoin="round" fill="#fafdff"/></svg>
<span class="t" style="left:603.2px;top:425.78px;font-size:11.6px;font-weight:400;color:#111;letter-spacing:1.166px;">/</span>
<span class="t" style="left:613.8px;top:425.78px;font-size:11.6px;font-weight:400;color:#111;letter-spacing:1.166px;">/</span>
<span class="t" style="left:735.8px;top:425.78px;font-size:11.6px;font-weight:400;color:#111;letter-spacing:0.000px;transform:scaleX(0.9570);transform-origin:0 0;">00:00:00</span>
<span class="t" style="left:798.8px;top:425.78px;font-size:11.6px;font-weight:400;color:#111;letter-spacing:0.000px;transform:scaleX(0.9570);transform-origin:0 0;">00:00:00</span>
<span class="t" style="left:871px;top:425.78px;font-size:11.6px;font-weight:400;color:#6e6e6e;letter-spacing:0.000px;transform:scaleX(0.9570);transform-origin:0 0;">00:00:00</span>
<div class="f" style="left:280px;top:446px;width:35px;height:19px;"></div>
<svg style="left:317px;top:448.4px;" width="15" height="14" viewBox="0 0 15 14" preserveAspectRatio="none" fill="none"><circle cx="5.9" cy="5.9" r="5.2" stroke="#3368cc" stroke-width="1.05"/><path d="M9.7 9.7 L13.6 13.3" stroke="#3368cc" stroke-width="1.15" stroke-linecap="round"/></svg>
<div class="g" style="left:333px;top:446px;width:261px;height:19px;"></div>
<div class="f" style="left:595px;top:446px;width:80px;height:19px;"></div>
<svg style="left:677px;top:447px;" width="15" height="17" viewBox="0 0 15 17" preserveAspectRatio="none" fill="none"><rect x="1.2" y="2.5" width="13.4" height="13.4" rx="1.4" stroke="#2d66cf" stroke-width="1.05" fill="#f7fbff"/><path d="M1.2 5.6 H14.6 M4.4 0.3 V2.5 M11.4 0.3 V2.5" stroke="#2d66cf" stroke-width="1.05"/><text x="7.9" y="14.2" font-family="Liberation Sans, sans-serif" font-size="10" font-weight="700" text-anchor="middle" fill="#3b7ad8" textLength="9.4" lengthAdjust="spacingAndGlyphs">31</text></svg>
<div class="g" style="left:693px;top:446px;width:27px;height:19px;"></div>
<div class="f" style="left:720px;top:446px;width:63px;height:19px;"></div>
<div class="f" style="left:783px;top:446px;width:63px;height:19px;"></div>
<div class="g" style="left:846px;top:446px;width:72px;height:19px;"></div>
<div class="" style="left:919px;top:445.5px;width:34px;height:21px;background:#fff;border:1px solid #c9c9c9;border-radius:3.5px;"></div>
<svg style="left:928.6px;top:447.6px;" width="13" height="17" viewBox="0 0 13 17" preserveAspectRatio="none" fill="none"><path d="M2.2 0.8 H7 L11.9 5.3 V14.4 Q11.9 15.9 10.4 15.9 H2.2 Q0.7 15.9 0.7 14.4 V2.3 Q0.7 0.8 2.2 0.8 Z M6.8 1 V4 Q6.8 5.4 8.2 5.4 H11.7" stroke="#2f5fbe" stroke-width="1.15" stroke-linejoin="round" fill="#fafdff"/></svg>
<span class="t" style="left:603.2px;top:447.78px;font-size:11.6px;font-weight:400;color:#111;letter-spacing:1.166px;">/</span>
<span class="t" style="left:613.8px;top:447.78px;font-size:11.6px;font-weight:400;color:#111;letter-spacing:1.166px;">/</span>
<span class="t" style="left:735.8px;top:447.78px;font-size:11.6px;font-weight:400;color:#111;letter-spacing:0.000px;transform:scaleX(0.9570);transform-origin:0 0;">00:00:00</span>
<span class="t" style="left:798.8px;top:447.78px;font-size:11.6px;font-weight:400;color:#111;letter-spacing:0.000px;transform:scaleX(0.9570);transform-origin:0 0;">00:00:00</span>
<span class="t" style="left:871px;top:447.78px;font-size:11.6px;font-weight:400;color:#6e6e6e;letter-spacing:0.000px;transform:scaleX(0.9570);transform-origin:0 0;">00:00:00</span>
<div class="f" style="left:280px;top:468px;width:35px;height:19px;"></div>
<svg style="left:317px;top:470.4px;" width="15" height="14" viewBox="0 0 15 14" preserveAspectRatio="none" fill="none"><circle cx="5.9" cy="5.9" r="5.2" stroke="#3368cc" stroke-width="1.05"/><path d="M9.7 9.7 L13.6 13.3" stroke="#3368cc" stroke-width="1.15" stroke-linecap="round"/></svg>
<div class="g" style="left:333px;top:468px;width:261px;height:19px;"></div>
<div class="f" style="left:595px;top:468px;width:80px;height:19px;"></div>
<svg style="left:677px;top:469px;" width="15" height="17" viewBox="0 0 15 17" preserveAspectRatio="none" fill="none"><rect x="1.2" y="2.5" width="13.4" height="13.4" rx="1.4" stroke="#2d66cf" stroke-width="1.05" fill="#f7fbff"/><path d="M1.2 5.6 H14.6 M4.4 0.3 V2.5 M11.4 0.3 V2.5" stroke="#2d66cf" stroke-width="1.05"/><text x="7.9" y="14.2" font-family="Liberation Sans, sans-serif" font-size="10" font-weight="700" text-anchor="middle" fill="#3b7ad8" textLength="9.4" lengthAdjust="spacingAndGlyphs">31</text></svg>
<div class="g" style="left:693px;top:468px;width:27px;height:19px;"></div>
<div class="f" style="left:720px;top:468px;width:63px;height:19px;"></div>
<div class="f" style="left:783px;top:468px;width:63px;height:19px;"></div>
<div class="g" style="left:846px;top:468px;width:72px;height:19px;"></div>
<div class="" style="left:919px;top:467.5px;width:34px;height:21px;background:#fff;border:1px solid #c9c9c9;border-radius:3.5px;"></div>
<svg style="left:928.6px;top:469.6px;" width="13" height="17" viewBox="0 0 13 17" preserveAspectRatio="none" fill="none"><path d="M2.2 0.8 H7 L11.9 5.3 V14.4 Q11.9 15.9 10.4 15.9 H2.2 Q0.7 15.9 0.7 14.4 V2.3 Q0.7 0.8 2.2 0.8 Z M6.8 1 V4 Q6.8 5.4 8.2 5.4 H11.7" stroke="#2f5fbe" stroke-width="1.15" stroke-linejoin="round" fill="#fafdff"/></svg>
<span class="t" style="left:603.2px;top:469.78px;font-size:11.6px;font-weight:400;color:#111;letter-spacing:1.166px;">/</span>
<span class="t" style="left:613.8px;top:469.78px;font-size:11.6px;font-weight:400;color:#111;letter-spacing:1.166px;">/</span>
<span class="t" style="left:735.8px;top:469.78px;font-size:11.6px;font-weight:400;color:#111;letter-spacing:0.000px;transform:scaleX(0.9570);transform-origin:0 0;">00:00:00</span>
<span class="t" style="left:798.8px;top:469.78px;font-size:11.6px;font-weight:400;color:#111;letter-spacing:0.000px;transform:scaleX(0.9570);transform-origin:0 0;">00:00:00</span>
<span class="t" style="left:871px;top:469.78px;font-size:11.6px;font-weight:400;color:#6e6e6e;letter-spacing:0.000px;transform:scaleX(0.9570);transform-origin:0 0;">00:00:00</span>
<span class="t" style="left:399.8px;top:493.28px;font-size:11.6px;font-weight:400;color:#666;letter-spacing:0.000px;transform:scaleX(0.8873);transform-origin:0 0;">Serviço concluído</span>
<div class="" style="left:487px;top:493px;width:14px;height:14px;background:#e9e9e9;border:1px solid #b4b4b4;border-radius:2px;"></div>
<svg style="left:487px;top:493px;" width="14" height="14" viewBox="0 0 14 14" preserveAspectRatio="none" fill="none"><path d="M3.2 7.2 L5.9 10.2 L10.8 3.4" stroke="#8a8a8a" stroke-width="1.7" stroke-linecap="round" stroke-linejoin="round"/></svg>
<span class="t" style="left:420.7px;top:515.28px;font-size:11.6px;font-weight:400;color:#111;letter-spacing:0.000px;transform:scaleX(0.8663);transform-origin:0 0;">OS concluída</span>
<div class="" style="left:487px;top:515px;width:14px;height:14px;background:#fff;border:1px solid #8c8c8c;border-radius:2px;"></div>
<svg style="left:487px;top:515px;" width="14" height="14" viewBox="0 0 14 14" preserveAspectRatio="none" fill="none"><path d="M3.2 7.2 L5.9 10.2 L10.8 3.4" stroke="#111" stroke-width="1.7" stroke-linecap="round" stroke-linejoin="round"/></svg>
<span class="t" style="left:725.3px;top:491.98px;font-size:11.6px;font-weight:400;color:#666;letter-spacing:0.000px;transform:scaleX(0.9400);transform-origin:0 0;">Tempo total já realizado</span>
<span class="t" style="left:709.6px;top:513.98px;font-size:11.6px;font-weight:400;color:#666;letter-spacing:0.000px;transform:scaleX(0.9353);transform-origin:0 0;">Tempo total previsto na OS</span>
<span class="t" style="left:764.8px;top:535.98px;font-size:11.6px;font-weight:400;color:#666;letter-spacing:0.000px;transform:scaleX(0.9459);transform-origin:0 0;">Tempo restante</span>
<div class="g" style="left:846px;top:490px;width:72px;height:19px;"></div>
<div class="g" style="left:846px;top:512px;width:72px;height:19px;"></div>
<div class="f" style="left:846px;top:534px;width:72px;height:19px;"></div>
<span class="t" style="left:858.3px;top:491.98px;font-size:11.6px;font-weight:400;color:#6e6e6e;letter-spacing:0.000px;transform:scaleX(0.9633);transform-origin:0 0;">0009:30:00</span>
<span class="t" style="left:858.3px;top:513.98px;font-size:11.6px;font-weight:400;color:#6e6e6e;letter-spacing:0.000px;transform:scaleX(0.9633);transform-origin:0 0;">0000:00:00</span>
<span class="t" style="left:858.3px;top:535.98px;font-size:11.6px;font-weight:400;color:#111;letter-spacing:0.000px;transform:scaleX(0.9633);transform-origin:0 0;">0000:00:00</span>
<div class="" style="left:270px;top:566px;width:729px;height:1px;background:#e3e3e3;"></div>
<div class="" style="left:783px;top:577px;width:99px;height:40px;background:#fff;border:1px solid #cacaca;border-radius:4px;"></div>
<svg style="left:803px;top:590px;" width="14" height="14" viewBox="0 0 14 14" preserveAspectRatio="none" fill="none"><path d="M0.5 0.5 L13.5 13.5 M13.5 0.5 L0.5 13.5" stroke="#3368cc" stroke-width="1.15"/></svg>
<span class="t" style="left:820.7px;top:588.98px;font-size:11.6px;font-weight:400;color:#111;letter-spacing:0.000px;transform:scaleX(0.8900);transform-origin:0 0;">Cancelar</span>
<div class="" style="left:892px;top:578px;width:98px;height:39px;background:#1b68dd;border-radius:2px;"></div>
<span class="t" style="left:910px;top:582.48px;font-size:11.6px;font-weight:400;color:#fff;letter-spacing:0.000px;transform:scaleX(0.9119);transform-origin:0 0;"><u>A</u>vançar</span>
<span class="t" style="left:900.4px;top:595.78px;font-size:11.6px;font-weight:400;color:#fff;letter-spacing:0.000px;transform:scaleX(0.9247);transform-origin:0 0;">(page down)</span>
<svg style="left:969px;top:591px;" width="9" height="15" viewBox="0 0 9 15" preserveAspectRatio="none" fill="none"><path d="M1.2 1 L7.4 7.5 L1.2 14" stroke="#fff" stroke-width="1.3"/></svg>
<div class="" style="left:0px;top:633px;width:1223px;height:31px;background:#1b68dd;border-radius:0 0 0 8px;"></div>
<div class="" style="left:1223px;top:634px;width:47px;height:30px;background:#fdfdfd;border-radius:0 0 8px 0;"></div>
<span class="t" style="left:465px;top:633.38px;font-size:11.6px;font-weight:700;color:#fff;letter-spacing:0.099px;">Técnico que vai trabalhar ou já trabalhou no serviço</span>
<span class="t" style="left:559.8px;top:649.38px;font-size:11.6px;font-weight:700;color:#fff;letter-spacing:0.008px;">F4-Técnico padrão</span>
<span class="t" style="left:1235px;top:641.28px;font-size:11.6px;font-weight:400;color:#333;letter-spacing:0.000px;transform:scaleX(0.9244);transform-origin:0 0;">2.3-M</span>
<div class="" style="left:0px;top:0px;width:1270px;height:665px;border:1px solid #b9b9b9;border-radius:8px 8px 7px 7px;background:transparent;"></div>
</div></body></html>
